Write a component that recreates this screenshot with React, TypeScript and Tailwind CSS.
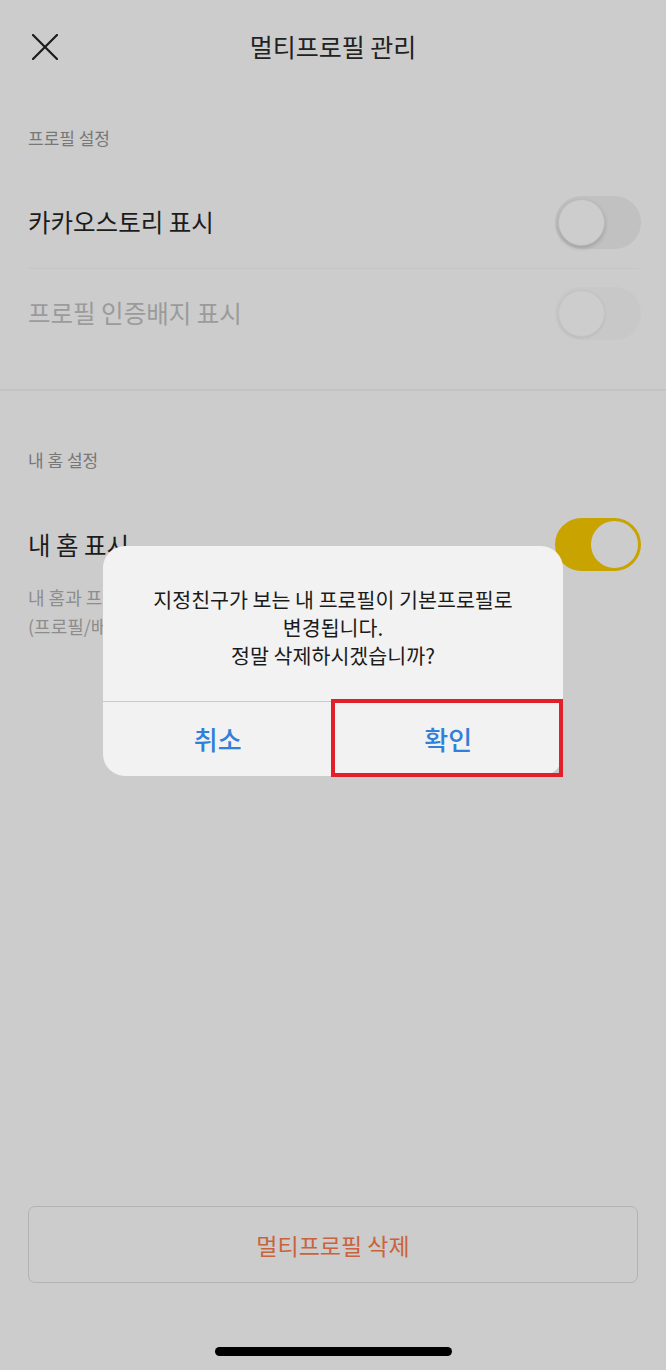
import React from 'react';

const FONT = { fontFamily: '"Noto Sans CJK KR", "Noto Sans", sans-serif' };

function Toggle({ on = false, faded = false }: { on?: boolean; faded?: boolean }) {
  const track = on ? 'bg-[#c9a300] justify-end' : faded ? 'bg-[#c8c8c8] justify-start' : 'bg-[#c1c1c1] justify-start';
  const knob = on
    ? 'bg-[#cccccc]'
    : faded
      ? 'bg-[#cdcdcd] shadow-[0_1px_3px_rgba(0,0,0,0.08)] border border-[#c4c4c4]'
      : 'bg-[#cdcdcd] shadow-[0_2px_4px_rgba(0,0,0,0.18)] border border-[#bdbdbd]';
  return (
    <div className={`flex items-center w-[86px] h-[53px] rounded-full p-[3px] shrink-0 ${track}`}>
      <div className={`w-[47px] h-[47px] rounded-full ${knob}`} />
    </div>
  );
}

function Row({ label, muted = false, children }: { label: string; muted?: boolean; children: React.ReactNode }) {
  return (
    <div className="flex items-center justify-between h-full">
      <span className={`text-[24.5px] leading-[32px] ${muted ? 'text-[#9b9b9b]' : 'text-[#1c1c1c]'}`}>{label}</span>
      {children}
    </div>
  );
}

export default function App() {
  return (
    <div className="relative min-h-[1370px] w-[666px] bg-[#cccccc] flex flex-col" style={FONT}>
      {/* header */}
      <div className="grid grid-cols-[1fr_auto_1fr] items-center h-[92px] px-[32px]">
        <svg width="26" height="26" viewBox="0 0 26 26" className="mt-[2px]">
          <line x1="1" y1="1" x2="25" y2="25" stroke="#1a1a1a" strokeWidth="2.2" strokeLinecap="round" />
          <line x1="25" y1="1" x2="1" y2="25" stroke="#1a1a1a" strokeWidth="2.2" strokeLinecap="round" />
        </svg>
        <span className="text-[25px] leading-[32px] text-[#222222]">멀티프로필 관리</span>
        <span />
      </div>

      {/* profile settings */}
      <div className="px-[28px] pr-[25px]">
        <div className="pt-[34px] text-[17px] leading-[24px] text-[#777777]">프로필 설정</div>
        <div className="mt-[26px] h-[92px]">
          <Row label="카카오스토리 표시">
            <Toggle />
          </Row>
        </div>
        <div className="h-px bg-[#c6c6c6] mr-[2px]" />
        <div className="h-[88px]">
          <Row label="프로필 인증배지 표시" muted>
            <Toggle faded />
          </Row>
        </div>
      </div>
      <div className="mt-[32px] h-[2px] bg-[#c3c3c3]" />

      {/* home settings */}
      <div className="px-[28px] pr-[25px]">
        <div className="pt-[57px] text-[17px] leading-[24px] text-[#777777]">내 홈 설정</div>
        <div className="mt-[46px] h-[53px]">
          <Row label="내 홈 표시">
            <Toggle on />
          </Row>
        </div>
        <div className="mt-[12px] text-[18px] leading-[29px] text-[#8d8d8d]">
          <div>내 홈과 프로필을 연결하면 친구가</div>
          <div>(프로필/배경 등) 내 홈을 볼 수 있어요.</div>
        </div>
      </div>

      {/* delete button */}
      <div className="mt-auto px-[28px]">
        <div className="h-[77px] rounded-[7px] border border-[#b3b3b3] flex items-center justify-center">
          <span className="text-[23px] leading-[30px] text-[#c9633d]">멀티프로필 삭제</span>
        </div>
      </div>
      <div className="flex justify-center pt-[64px] pb-[14px]">
        <div className="w-[237px] h-[9px] rounded-full bg-black" />
      </div>

      {/* alert overlay */}
      <div className="absolute inset-0 flex justify-center pt-[546px]">
        <div className="relative w-[460px] h-[230px] rounded-[22px] bg-[#f2f2f2] flex flex-col">
          <div className="pt-[39px] pb-[32px] text-center text-[20.6px] leading-[28px] text-[#1b1b1b]">
            <div>지정친구가 보는 내 프로필이 기본프로필로</div>
            <div>변경됩니다.</div>
            <div>정말 삭제하시겠습니까?</div>
          </div>
          <div className="h-px bg-[#c9c9c9]" />
          <div className="flex flex-1">
            <div className="flex-1 flex items-center justify-center text-[26px] leading-[32px] font-medium text-[#3080da]">취소</div>
            <div className="w-px bg-[#c9c9c9]" />
            <div className="flex-1 flex items-center justify-center text-[26px] leading-[32px] font-medium text-[#3080da]">확인</div>
          </div>
          <div className="absolute left-[228px] top-[153px] w-[232px] h-[78px] border-[4px] border-[#e31f2a]" />
        </div>
      </div>
    </div>
  );
}
